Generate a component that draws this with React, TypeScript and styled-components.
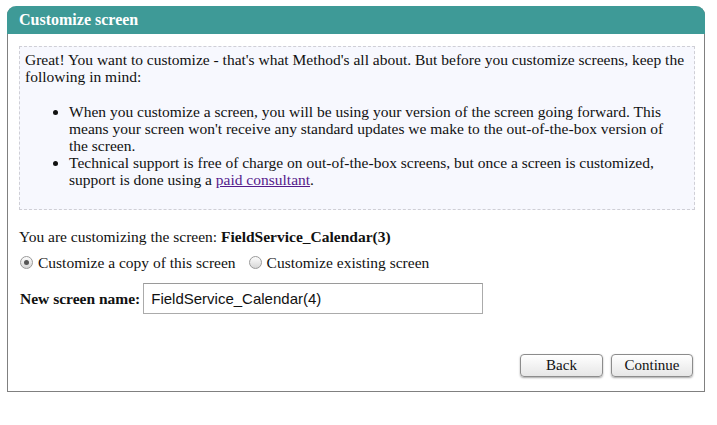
import React from "react";
import styled, { createGlobalStyle } from "styled-components";

const GlobalStyle = createGlobalStyle`
  body {
    margin: 0;
    background: #ffffff;
    font-family: "Liberation Serif", "Times New Roman", serif;
    font-size: 15.5px;
    color: #111111;
  }
`;

const Page = styled.div`
  padding: 6px 12px 0 7px;
`;

const Panel = styled.div`
  width: 698px;
  box-sizing: border-box;
  border: 1px solid #808080;
  border-top: none;
  border-radius: 9px 9px 0 0;
  background: #ffffff;
`;

const Header = styled.div`
  height: 28px;
  margin: 0 -1px;
  padding: 0 12px;
  display: flex;
  align-items: center;
  background: #3e9a97;
  color: #ffffff;
  font-weight: bold;
  font-size: 16px;
  border-radius: 9px 9px 0 0;
`;

const Body = styled.div`
  padding: 12px 9px 14px 11px;
  display: flex;
  flex-direction: column;
`;

const InfoBox = styled.div`
  border: 1px dashed #cfcfd6;
  background: #f7f8fe;
  padding: 4px 5px 4px 5px;
  line-height: 17px;
`;

const Intro = styled.p`
  margin: 0;
`;

const Notes = styled.ul`
  margin: 18px 0 17px 0;
  padding: 0 12px 0 44px;
`;

const Link = styled.a`
  color: #551a8b;
  text-decoration: underline;
`;

const Line = styled.div`
  margin-top: 18px;
  line-height: 17px;
`;

const Choices = styled.div`
  margin-top: 9px;
  display: flex;
  align-items: center;
  line-height: 17px;
`;

const Choice = styled.label`
  display: flex;
  align-items: center;
  gap: 5px;
  margin-right: 12px;
  margin-left: 1px;
`;

const Radio = styled.span<{ $checked?: boolean }>`
  width: 11px;
  height: 11px;
  border-radius: 50%;
  border: 1px solid #9a9a9a;
  background: linear-gradient(#fdfdfd, #d6d6d6);
  display: flex;
  align-items: center;
  justify-content: center;
  &::after {
    content: "";
    width: 5px;
    height: 5px;
    border-radius: 50%;
    background: ${(p) => (p.$checked ? "#555555" : "transparent")};
  }
`;

const NameRow = styled.div`
  margin-top: 12px;
  display: flex;
  align-items: center;
  gap: 3px;
`;

const NameLabel = styled.label`
  font-weight: bold;
  margin-left: 1px;
`;

const NameInput = styled.input`
  width: 340px;
  height: 31px;
  box-sizing: border-box;
  border: 1px solid #ababab;
  border-top-color: #9a9a9a;
  padding: 0 7px;
  font-family: "Liberation Sans", Arial, sans-serif;
  font-size: 15px;
  color: #111111;
  outline: none;
`;

const Actions = styled.div`
  margin-top: 40px;
  padding-right: 2px;
  display: flex;
  justify-content: flex-end;
  gap: 8px;
`;

const Button = styled.button<{ $w: number }>`
  width: ${(p) => p.$w}px;
  height: 23px;
  border: 1px solid #8c8c8c;
  border-radius: 4px;
  background: linear-gradient(#ffffff, #e6e6e6);
  box-shadow: 0 1px 2px rgba(0, 0, 0, 0.35);
  font-family: "Liberation Serif", "Times New Roman", serif;
  font-size: 15px;
  color: #111111;
  padding: 0;
`;

export default function App() {
  return (
    <Page>
      <GlobalStyle />
      <Panel>
        <Header>Customize screen</Header>
        <Body>
          <InfoBox>
            <Intro>
              Great! You want to customize - that's what Method's all about. But before you customize screens, keep
              the following in mind:
            </Intro>
            <Notes>
              <li>
                When you customize a screen, you will be using your version of the screen going forward. This means
                your screen won't receive any standard updates we make to the out-of-the-box version of the screen.
              </li>
              <li>
                Technical support is free of charge on out-of-the-box screens, but once a screen is customized,
                support is done using a <Link href="#">paid consultant</Link>.
              </li>
            </Notes>
          </InfoBox>
          <Line>
            You are customizing the screen: <b>FieldService_Calendar(3)</b>
          </Line>
          <Choices>
            <Choice>
              <Radio $checked />
              Customize a copy of this screen
            </Choice>
            <Choice>
              <Radio />
              Customize existing screen
            </Choice>
          </Choices>
          <NameRow>
            <NameLabel>New screen name:</NameLabel>
            <NameInput defaultValue="FieldService_Calendar(4)" />
          </NameRow>
          <Actions>
            <Button $w={83}>Back</Button>
            <Button $w={82}>Continue</Button>
          </Actions>
        </Body>
      </Panel>
    </Page>
  );
}
